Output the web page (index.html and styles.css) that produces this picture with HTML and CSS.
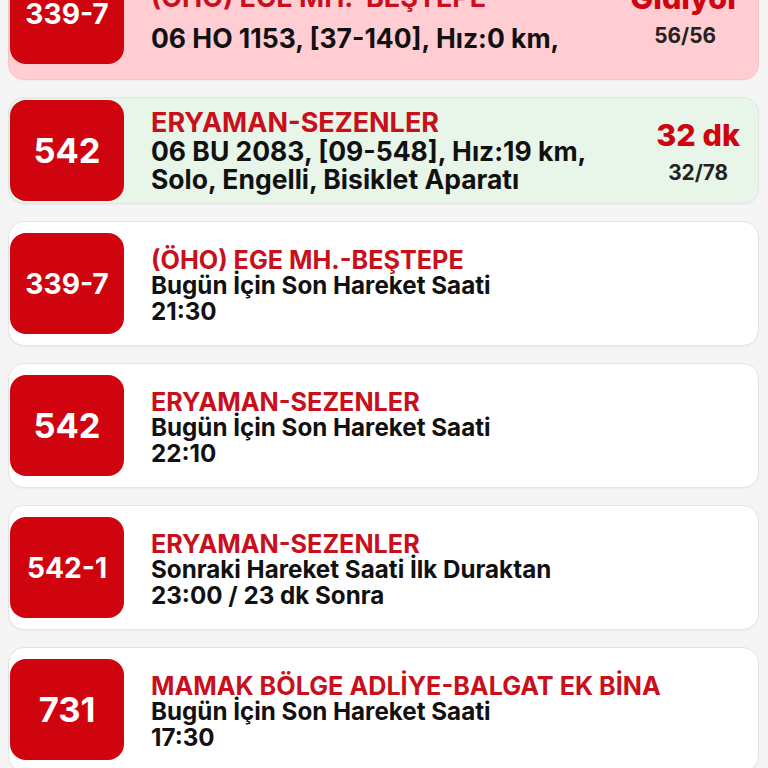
FILE: index.html
```html
<!DOCTYPE html>
<html lang="tr">
<head>
<meta charset="utf-8">
<title>Duraktaki Otobüsler</title>
<link rel="stylesheet" href="styles.css">
</head>
<body>
<div class="list">
  <div class="card card-pink card-first">
    <div class="badge"><span class="badge-num sm">339-7</span></div>
    <div class="info info-live info-first">
      <div class="title">(ÖHO) EGE MH.-BEŞTEPE</div>
      <div class="line gap">06 HO 1153, [37-140], Hız:0 km,</div>
    </div>
    <div class="eta">
      <div class="eta-main">Gidiyor</div>
      <div class="eta-sub">56/56</div>
    </div>
  </div>

  <div class="card card-green card-tight">
    <div class="badge"><span class="badge-num">542</span></div>
    <div class="info info-live">
      <div class="title">ERYAMAN-SEZENLER</div>
      <div class="line">06 BU 2083, [09-548], Hız:19 km,</div>
      <div class="line">Solo, Engelli, Bisiklet Aparatı</div>
    </div>
    <div class="eta">
      <div class="eta-main">32 dk</div>
      <div class="eta-sub">32/78</div>
    </div>
  </div>

  <div class="card">
    <div class="badge"><span class="badge-num sm">339-7</span></div>
    <div class="info">
      <div class="title">(ÖHO) EGE MH.-BEŞTEPE</div>
      <div class="line">Bugün İçin Son Hareket Saati</div>
      <div class="line">21:30</div>
    </div>
  </div>

  <div class="card">
    <div class="badge"><span class="badge-num">542</span></div>
    <div class="info">
      <div class="title">ERYAMAN-SEZENLER</div>
      <div class="line">Bugün İçin Son Hareket Saati</div>
      <div class="line">22:10</div>
    </div>
  </div>

  <div class="card">
    <div class="badge"><span class="badge-num sm">542-1</span></div>
    <div class="info">
      <div class="title">ERYAMAN-SEZENLER</div>
      <div class="line">Sonraki Hareket Saati İlk Duraktan</div>
      <div class="line">23:00 / 23 dk Sonra</div>
    </div>
  </div>

  <div class="card">
    <div class="badge"><span class="badge-num">731</span></div>
    <div class="info">
      <div class="title">MAMAK BÖLGE ADLİYE-BALGAT EK BİNA</div>
      <div class="line">Bugün İçin Son Hareket Saati</div>
      <div class="line">17:30</div>
    </div>
  </div>
</div>
</body>
</html>
```

FILE: styles.css
```css
html, body {
  margin: 0;
  padding: 0;
  background: #f5f5f5;
  font-family: Inter, "Noto Sans", "DejaVu Sans", sans-serif;
  overflow: hidden;
}

.list {
  display: flex;
  flex-direction: column;
  gap: 17px;
  margin-top: -52px;
  padding: 0 9px 0 8px;
}

.card {
  display: flex;
  align-items: center;
  background: #ffffff;
  border: 1px solid #e4e4e4;
  border-radius: 16px;
  padding: 11px 18px 11px 1px;
  box-shadow: 0 1px 2px rgba(0, 0, 0, 0.04);
}

.card-tight {
  padding-top: 2px;
  padding-bottom: 2px;
}

.card-first {
  padding-top: 14px;
  padding-bottom: 15px;
}

.card-pink {
  background: #ffcdd2;
  border-color: #f5c4c8;
}

.card-green {
  background: #e8f5e9;
  border-color: #dde9de;
}

.badge {
  flex: 0 0 114px;
  height: 101px;
  background: #d0040f;
  border-radius: 16px;
  display: flex;
  align-items: center;
  justify-content: center;
}

.badge-num {
  color: #ffffff;
  font-weight: 700;
  font-size: 34.5px;
}

.badge-num.sm {
  font-size: 28.2px;
}

.info {
  flex: 1;
  margin-left: 27px;
  padding-top: 5px;
  display: flex;
  flex-direction: column;
  white-space: nowrap;
}

.title {
  color: #c8101c;
  font-weight: 700;
  font-size: 25.2px;
  line-height: 25.5px;
}

.line {
  color: #111111;
  font-weight: 700;
  font-size: 24.2px;
  line-height: 25.5px;
}

.info-live {
  padding-top: 0;
}

.info-live .title {
  font-size: 27px;
  line-height: 28px;
}

.info-live .line {
  font-size: 26.5px;
  line-height: 28px;
}

.info-first {
  padding-top: 8px;
}

.line.gap {
  margin-top: 12px;
}

.eta {
  display: flex;
  flex-direction: column;
  align-items: center;
  gap: 12px;
  padding-top: 2px;
}

.eta-main {
  color: #d0040f;
  font-weight: 800;
  font-size: 30.5px;
  line-height: 30px;
}

.eta-sub {
  color: #222222;
  font-weight: 700;
  font-size: 20.8px;
  line-height: 22px;
}
```
